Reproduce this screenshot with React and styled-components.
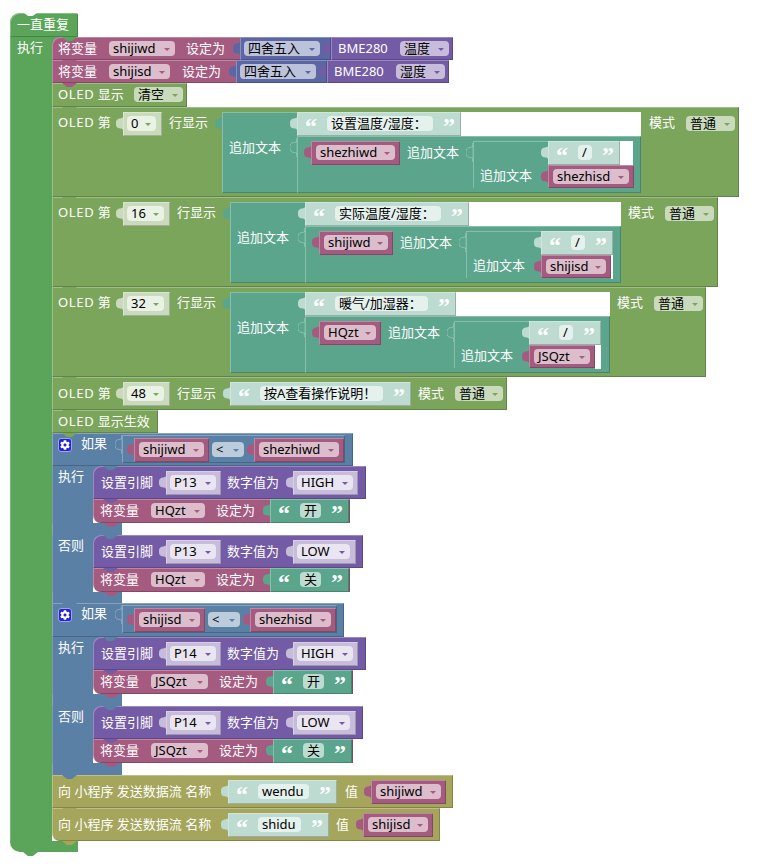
import React from 'react';
import styled, { createGlobalStyle } from 'styled-components';
import { FaCog } from 'react-icons/fa';

const C = { loop: '#5ba55b', vars: '#a55b80', math: '#5b67a5', pin: '#745ba5', oled: '#7ba55b', text: '#5ba58c', logic: '#5b80a5', wx: '#a5a55b' };
const S = { oled: '#cadbbd', text: '#bddbd1', pin: '#c7bddb' };
const EMBOSS = 'inset 1px 1px 0 rgba(255,255,255,.28), inset -1px -1px 0 rgba(0,0,0,.2)';

const Global = createGlobalStyle`
	html, body { margin: 0; background: #fff; }
	body { font-family: "Noto Sans", "Noto Sans CJK SC", sans-serif; font-size: 13px; }
`;

const Page = styled.div`
	padding: 13px 0 12px 10px;
	box-sizing: border-box;
`;

const Stmt = styled.div`
	position: relative;
	display: flex;
	flex: none;
	align-items: flex-start;
	box-sizing: border-box;
	width: ${(p) => p.$w}px;
	height: ${(p) => p.$h}px;
	padding: ${(p) => p.$pt || 0}px 0 0 ${(p) => p.$pl ?? 6}px;
	background: ${(p) => p.$c};
	box-shadow: ${(p) => (p.$flat ? 'inset 1px 0 0 rgba(255,255,255,.28)' : EMBOSS)};
	border-top-left-radius: ${(p) => (p.$first ? 8 : 0)}px;
	border-bottom-left-radius: ${(p) => (p.$last ? 8 : 0)}px;
	&::after {
		content: "";
		position: absolute;
		left: ${(p) => p.$bl ?? 10}px;
		bottom: -4px;
		width: 15px;
		height: 4px;
		background: ${(p) => p.$c};
		clip-path: polygon(0 0, 100% 0, 66% 100%, 33% 100%);
		z-index: 3;
	}
`;

const Label = styled.div`
	flex: none;
	width: ${(p) => p.$w}px;
	margin-left: ${(p) => p.$ml || 0}px;
	margin-top: ${(p) => p.$mt || 0}px;
	color: #fff;
	line-height: 22px;
	white-space: nowrap;
`;

const Wide = styled.span`
	letter-spacing: 0.7px;
`;

const Field = styled.div`
	display: flex;
	align-items: center;
	flex: none;
	box-sizing: border-box;
	width: ${(p) => p.$w}px;
	height: 15px;
	margin: 4px 0 0 ${(p) => p.$ml ?? 4}px;
	padding-left: 4px;
	border-radius: 4px;
	background: rgba(255, 255, 255, 0.6);
	color: #000;
	line-height: 15px;
	white-space: nowrap;
`;

const Arrow = styled.span`
	margin: 1px 5px 0 auto;
	border-style: solid;
	border-width: 3px 3px 0;
	border-color: ${(p) => p.$c} transparent transparent;
`;

const Value = styled.div`
	display: flex;
	flex: none;
	align-items: flex-start;
	position: relative;
	box-sizing: border-box;
	width: ${(p) => p.$w}px;
	height: ${(p) => p.$h || 24}px;
	background: ${(p) => p.$c};
	box-shadow: ${EMBOSS};
	color: #fff;
`;

const Plug = styled.div`
	display: flex;
	flex: none;
	align-items: flex-start;
	margin-left: ${(p) => p.$ml || 0}px;
`;

const TabIcon = styled.svg`
	display: block;
	flex: none;
	width: 7px;
	height: 19px;
	margin-top: 2px;
`;

const Quote = styled.span`
	flex: none;
	width: 12px;
	margin-left: ${(p) => p.$ml || 0}px;
	color: #fff;
	font: bold 24px/28px "Liberation Serif", serif;
`;

const QuoteRow = styled(Value)`
	padding-left: 8px;
`;

const Fill = styled.div`
	flex: 1;
	height: 24px;
	background: #fff;
`;

const JoinBox = styled.div`
	display: flex;
	flex: none;
	width: ${(p) => p.$w}px;
	height: ${(p) => p.$h}px;
	background: ${C.text};
	box-shadow: ${EMBOSS};
`;

const JoinLabel = styled.div`
	flex: none;
	box-sizing: border-box;
	width: 68px;
	padding: ${(p) => p.$pt}px 0 0 7px;
	color: #fff;
	line-height: 22px;
	white-space: nowrap;
`;

const JoinCol = styled.div`
	display: flex;
	flex-direction: column;
	flex: 1;
	min-width: 0;
`;

const JoinRow = styled.div`
	display: flex;
	align-items: flex-start;
	flex: ${(p) => (p.$grow ? 1 : 'none')};
`;

const JoinInner = styled.div`
	display: flex;
	align-items: flex-start;
	flex: 1;
	align-self: stretch;
	box-sizing: border-box;
	padding: 5px 0 0 7px;
	background: ${C.text};
	box-shadow: ${EMBOSS};
`;

const NestedJoin = styled(JoinBox)`
	box-shadow: inset 1px 1px 0 rgba(255,255,255,.28);
`;

const Body = styled.div`
	display: flex;
	align-items: stretch;
`;

const Bar = styled.div`
	flex: none;
	box-sizing: border-box;
	width: ${(p) => p.$w}px;
	padding-left: ${(p) => p.$pl}px;
	background: ${(p) => p.$c};
	box-shadow: inset 1px 0 0 rgba(255,255,255,.2);
	color: #fff;
	line-height: 20px;
	white-space: nowrap;
`;

const Slot = styled.div`
	display: flex;
	flex-direction: column;
	align-items: flex-start;
	background: linear-gradient(${(p) => p.$c}, ${(p) => p.$c}) 0 0 / 8px 8px no-repeat;
`;

const Hat = styled(Stmt)`
	border-top-left-radius: 9px;
	border-top-right-radius: 2px;
	&::before {
		content: "";
		position: absolute;
		left: 14px;
		top: 0;
		width: 13px;
		height: 3px;
		background: #fff;
		clip-path: polygon(0 0, 100% 0, 66% 100%, 33% 100%);
	}
`;

const Foot = styled.div`
	position: relative;
	width: 68px;
	height: 11px;
	background: ${C.loop};
	border-bottom-left-radius: 10px;
	&::after {
		content: "";
		position: absolute;
		left: 13px;
		bottom: -4px;
		width: 15px;
		height: 4px;
		background: ${C.loop};
		clip-path: polygon(0 0, 100% 0, 66% 100%, 33% 100%);
	}
`;

const IfBox = styled.div`
	display: flex;
	flex-direction: column;
	align-items: flex-start;
`;

const Gear = styled.div`
	display: flex;
	align-items: center;
	justify-content: center;
	flex: none;
	box-sizing: border-box;
	width: 14px;
	height: 14px;
	margin-top: 5px;
	border: 1px solid #9fa6e8;
	border-radius: 3px;
	background: #2424cf;
	color: #fff;
	font-size: 10px;
`;

const Compare = styled(Value)`
	height: 28px;
	margin-top: 2px;
	padding: 3px 0 0 5px;
`;

function Tab({ c, hollow }) {
	return (
		<TabIcon viewBox="0 0 7 19">
			<path
				d="M7 0V2.5C7 5 4 4 2 5C0 6 0 8 0 9.5S0 13 2 14C4 15 7 14 7 16.5V19z"
				fill={c}
				stroke={hollow ? 'rgba(255,255,255,.28)' : 'none'}
			/>
		</TabIcon>
	);
}

function Drop({ text, w, c, ml }) {
	return <Field $w={w} $ml={ml}>{text}<Arrow $c={c} /></Field>;
}

function VarBody({ name, w, h }) {
	return (
		<Value $c={C.vars} $w={w} $h={h}>
			<Drop text={name} w={w - 10} ml={5} c={C.vars} />
		</Value>
	);
}

function VarPlug({ name, w, ml, h }) {
	return (
		<Plug $ml={ml}>
			<Tab c={C.vars} />
			<VarBody name={name} w={w} h={h} />
		</Plug>
	);
}

function TextBody({ text, pill, c = S.text }) {
	return (
		<QuoteRow $c={c} $w={pill + 58}>
			<Quote>“</Quote>
			<Field $w={pill} $ml={10}>{text}</Field>
			<Quote $ml={10}>”</Quote>
		</QuoteRow>
	);
}

function TextPlug({ text, pill, ml, tint }) {
	const c = tint ? S.text : C.text;
	return (
		<Plug $ml={ml}>
			<Tab c={c} />
			<TextBody text={text} pill={pill} c={c} />
		</Plug>
	);
}

function ShadowDrop({ c, shadow, w, pill, text, ml }) {
	return (
		<Plug $ml={ml}>
			<Tab c={shadow} />
			<Value $c={shadow} $w={w}>
				<Drop text={text} w={pill} c={c} />
			</Value>
		</Plug>
	);
}

function SetRound({ name, pill, labelMl, prop, first, w }) {
	return (
		<Stmt $c={C.vars} $w={w} $h={23} $first={first}>
			<Label $w={51}>将变量</Label>
			<Drop text={name} w={pill} c={C.vars} ml={0} />
			<Label $w={47} $ml={labelMl}>设定为</Label>
			<Plug>
				<Tab c={C.math} />
				<Value $c={C.math} $w={91} $h={23}>
					<Drop text="四舍五入" w={76} c={C.math} />
					<Plug $ml={3}>
						<Tab c={C.pin} />
					</Plug>
				</Value>
				<Value $c={C.pin} $w={122} $h={23}>
					<Label $w={62} $ml={7}>BME280</Label>
					<Drop text={prop} w={49} c={C.pin} ml={0} />
				</Value>
			</Plug>
		</Stmt>
	);
}

function OledJoin({ no, w, dw, dp, joinW, text, textPill, v1, v1w, v2, v2w, tailW, modeMl }) {
	return (
		<Stmt $c={C.oled} $w={w} $h={90} $pt={5}>
			<Label $w={58} $mt={-1}><Wide>OLED</Wide> 第</Label>
			<ShadowDrop c={C.oled} shadow={S.oled} w={dw} pill={dp} text={no} />
			<Label $w={46} $ml={7} $mt={-1}>行显示</Label>
			<Tab c={C.text} />
			<JoinBox $w={joinW} $h={81}>
				<JoinLabel $pt={24}>追加文本</JoinLabel>
				<JoinCol>
					<JoinRow>
						<Tab c={S.text} />
						<TextBody text={text} pill={textPill} />
						<Fill />
					</JoinRow>
					<JoinRow $grow>
						<Tab c={C.text} hollow />
						<JoinInner>
							<VarPlug name={v1} w={v1w} />
							<Label $w={59} $ml={7}>追加文本</Label>
							<Tab c={C.text} hollow />
							<NestedJoin $w={tailW + 75} $h={47}>
								<JoinLabel $pt={23}>追加文本</JoinLabel>
								<JoinCol>
									<JoinRow>
										<Tab c={S.text} />
										<TextBody text="/" pill={14} />
										<Fill />
									</JoinRow>
									<JoinRow>
										<VarPlug name={v2} w={v2w} h={23} />
										<Fill />
									</JoinRow>
								</JoinCol>
							</NestedJoin>
						</JoinInner>
					</JoinRow>
				</JoinCol>
			</JoinBox>
			<Label $w={37} $ml={modeMl} $mt={-1}>模式</Label>
			<Drop text="普通" w={49} c={C.oled} ml={0} />
		</Stmt>
	);
}

function PinStmt({ pin, level, w, sw, pw }) {
	return (
		<Stmt $c={C.pin} $w={w} $h={33} $pt={5} $pl={8} $first>
			<Label $w={58}>设置引脚</Label>
			<ShadowDrop c={C.pin} shadow={S.pin} w={55} pill={46} text={pin} />
			<Label $w={59} $ml={6}>数字值为</Label>
			<ShadowDrop c={C.pin} shadow={S.pin} w={sw} pill={pw} text={level} />
		</Stmt>
	);
}

function SetText({ name, pill, value }) {
	return (
		<Stmt $c={C.vars} $w={pill + 203} $h={24} $pl={7} $last $bl={11}>
			<Label $w={51}>将变量</Label>
			<Drop text={name} w={pill} c={C.vars} ml={0} />
			<Label $w={47} $ml={11}>设定为</Label>
			<TextPlug text={value} pill={21} />
		</Stmt>
	);
}

function Arm({ label, pin, level, sw, pw, w, name, pill, value }) {
	return (
		<Body>
			<Bar $c={C.logic} $w={41} $pl={6}>{label}</Bar>
			<Slot $c={C.logic}>
				<PinStmt pin={pin} level={level} w={w} sw={sw} pw={pw} />
				<SetText name={name} pill={pill} value={value} />
			</Slot>
		</Body>
	);
}

function IfElse({ w, h, v1, v1w, v2, v2w, cmpW, pin, name, pill, on, off, gapBottom, gapMid }) {
	return (
		<IfBox>
			<Stmt $c={C.logic} $w={w} $h={h} $bl={51}>
				<Gear><FaCog /></Gear>
				<Label $w={34} $ml={9} $mt={-1}>如果</Label>
				<Tab c={C.logic} hollow />
				<Compare $c={C.logic} $w={cmpW}>
					<VarPlug name={v1} w={v1w} />
					<Drop text="<" w={32} c={C.logic} ml={3} />
					<VarPlug name={v2} w={v2w} ml={3} />
				</Compare>
			</Stmt>
			<Arm label="执行" pin={pin} level="HIGH" sw={65} pw={56} w={273} name={name} pill={pill} value={on} />
			<Stmt $c={C.logic} $w={70} $h={gapMid} $bl={51} $flat />
			<Arm label="否则" pin={pin} level="LOW" sw={63} pw={53} w={270} name={name} pill={pill} value={off} />
			<Stmt $c={C.logic} $w={70} $h={gapBottom} $flat />
		</IfBox>
	);
}

function SendStream({ name, pill, ml, lw, v, vw, w, last }) {
	return (
		<Stmt $c={C.wx} $w={w} $h={33} $pt={5} $last={last}>
			<Label $w={163}>向 小程序 发送数据流 名称</Label>
			<TextPlug text={name} pill={pill} tint />
			<Label $w={lw} $ml={ml}>值</Label>
			<VarPlug name={v} w={vw} />
		</Stmt>
	);
}

export default function App() {
	return (
		<Page>
			<Global />
			<Hat $c={C.loop} $w={68} $h={24} $pl={7} $bl={52}>
				<Label $w={60}>一直重复</Label>
			</Hat>
			<Body>
				<Bar $c={C.loop} $w={42} $pl={7}>执行</Bar>
				<Slot $c={C.loop}>
					<SetRound name="shijiwd" pill={66} labelMl={11} prop="温度" w={401} first />
					<SetRound name="shijisd" pill={61} labelMl={12} prop="湿度" w={397} />
					<Stmt $c={C.oled} $w={135} $h={24}>
						<Label $w={76}><Wide>OLED</Wide> 显示</Label>
						<Drop text="清空" w={49} c={C.oled} ml={0} />
					</Stmt>
					<OledJoin no="0" w={687} dw={39} dp={29} joinW={419} text="设置温度/湿度：" textPill={106}
						v1="shezhiwd" v1w={89} v2="shezhisd" v2w={86} tailW={85} modeMl={8} />
					<OledJoin no="16" w={666} dw={47} dp={37} joinW={391} text="实际温度/湿度：" textPill={106}
						v1="shijiwd" v1w={74} v2="shijisd" v2w={70} tailW={72} modeMl={7} />
					<OledJoin no="32" w={654} dw={47} dp={37} joinW={380} text="暖气/加湿器：" textPill={93}
						v1="HQzt" v1w={62} v2="JSQzt" v2w={66} tailW={72} modeMl={7} />
					<Stmt $c={C.oled} $w={455} $h={33} $pt={5}>
						<Label $w={58}><Wide>OLED</Wide> 第</Label>
						<ShadowDrop c={C.oled} shadow={S.oled} w={47} pill={37} text="48" />
						<Label $w={46} $ml={7}>行显示</Label>
						<TextPlug text="按A查看操作说明！" pill={123} tint />
						<Label $w={37} $ml={7}>模式</Label>
						<Drop text="普通" w={48} c={C.oled} ml={0} />
					</Stmt>
					<Stmt $c={C.oled} $w={106} $h={23}>
						<Label $w={100}><Wide>OLED</Wide> 显示生效</Label>
					</Stmt>
					<IfElse w={301} h={33} v1="shijiwd" v1w={75} v2="shezhiwd" v2w={90} cmpW={223} pin="P13"
						name="HQzt" pill={54} on="开" off="关" gapMid={12} gapBottom={11} />
					<IfElse w={292} h={34} v1="shijisd" v1w={71} v2="shezhisd" v2w={86} cmpW={215} pin="P14"
						name="JSQzt" pill={57} on="开" off="关" gapMid={12} gapBottom={12} />
					<SendStream name="wendu" pill={51} ml={8} lw={19} v="shijiwd" vw={75} w={401} />
					<SendStream name="shidu" pill={43} ml={7} lw={20} v="shijisd" vw={70} w={388} last />
				</Slot>
			</Body>
			<Foot />
		</Page>
	);
}
